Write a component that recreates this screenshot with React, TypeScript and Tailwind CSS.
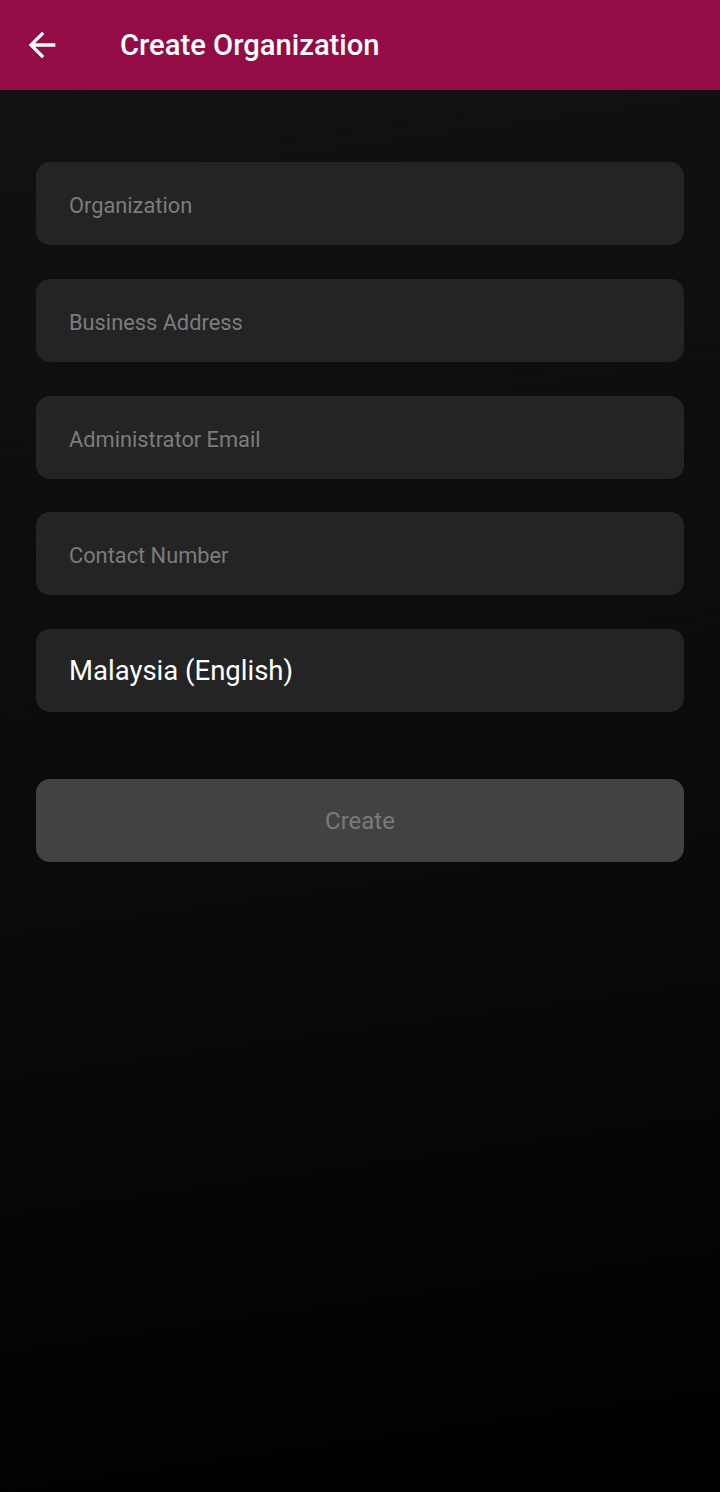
import React from "react";

const Field = ({ label, value, className = "" }: { label?: string; value?: string; className?: string }) => (
  <div className={`h-[83px] rounded-[14px] bg-[#242424] flex items-center px-[33px] ${className}`}>
    {value ? (
      <span className="pt-[1px] text-[27.5px] text-white">{value}</span>
    ) : (
      <span className="pt-[5px] text-[21.8px] text-[#7c7c7c]">{label}</span>
    )}
  </div>
);

export default function App() {
  return (
    <div
      className="w-[720px] h-[1492px] flex flex-col bg-[linear-gradient(172deg,#121212_0%,#0b0b0b_55%,#000000_100%)]"
      style={{ fontFamily: "Roboto, 'Noto Sans', sans-serif" }}
    >
      <header className="h-[90px] bg-[#930c46] flex items-center shrink-0">
        <div className="w-[120px] flex items-center pl-[22px]">
          <svg width="40" height="40" viewBox="0 0 24 24" fill="#ffffff">
            <path d="M20 11H7.83l5.59-5.59L12 4l-8 8 8 8 1.41-1.41L7.83 13H20v-2z" />
          </svg>
        </div>
        <h1 className="pt-[2px] text-[29.2px] font-medium text-white">Create Organization</h1>
      </header>
      <main className="px-[36px] pt-[72px] flex flex-col">
        <div className="flex flex-col">
          <Field label="Organization" />
          <Field label="Business Address" className="mt-[34px]" />
          <Field label="Administrator Email" className="mt-[34px]" />
          <Field label="Contact Number" className="mt-[33px]" />
          <Field value="Malaysia (English)" className="mt-[34px]" />
        </div>
        <button className="mt-[67px] h-[83px] rounded-[14px] bg-[#424242] text-[24px] text-[#7a7a7a] flex items-center justify-center">
          Create
        </button>
      </main>
    </div>
  );
}
